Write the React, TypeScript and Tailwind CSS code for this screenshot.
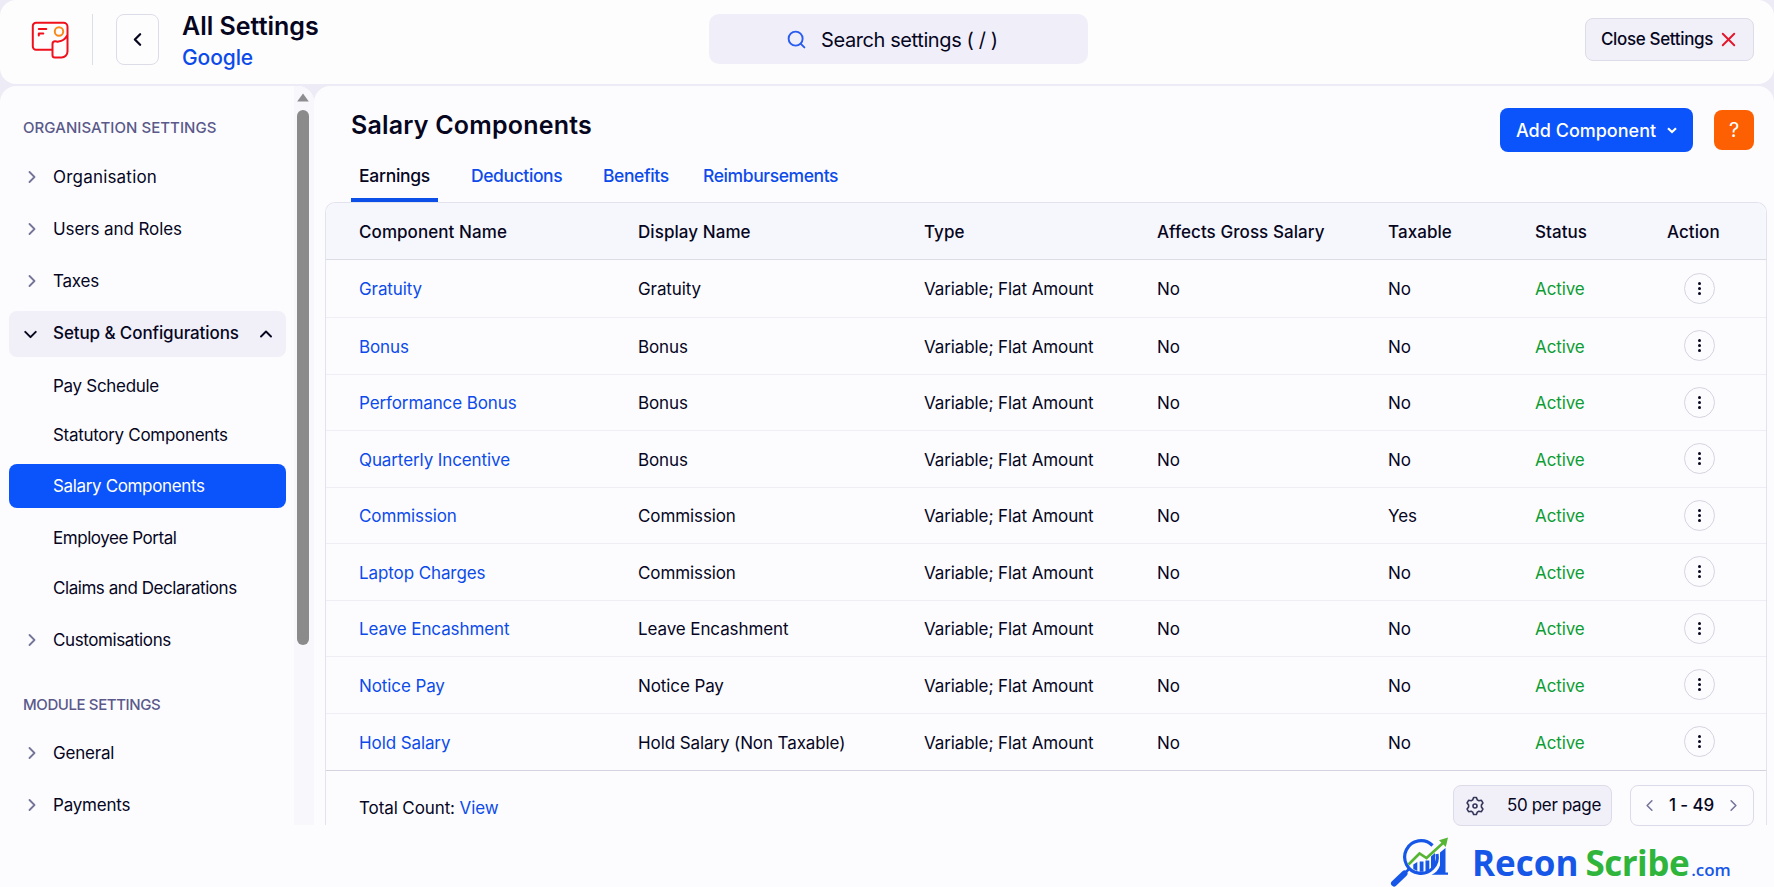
import { ChevronDown, ChevronLeft, ChevronRight, ChevronUp, Search, X } from "lucide-react";

type NavItem = {
  label: string;
  kind: "group" | "open" | "child" | "active";
  style: string;
};

const ORGANISATION: NavItem[] = [
  { label: "Organisation", kind: "group", style: "h-[52px] tracking-[0.2px]" },
  { label: "Users and Roles", kind: "group", style: "h-[52px] tracking-[-0.1px]" },
  { label: "Taxes", kind: "group", style: "h-[52px] mb-1 tracking-[-0.2px]" },
  { label: "Setup & Configurations", kind: "open", style: "h-[46px] tracking-[-0.1px]" },
  { label: "Pay Schedule", kind: "child", style: "h-[59px] tracking-[-0.3px]" },
  { label: "Statutory Components", kind: "child", style: "h-[40px] mb-[8px] tracking-[-0.3px]" },
  { label: "Salary Components", kind: "active", style: "h-[44px] mb-[5px] pt-0.5 tracking-[-0.35px]" },
  { label: "Employee Portal", kind: "child", style: "h-[50px] pt-0.5 tracking-[-0.45px]" },
  { label: "Claims and Declarations", kind: "child", style: "h-[51px] tracking-[-0.45px]" },
  { label: "Customisations", kind: "group", style: "h-[52px] tracking-[-0.4px]" },
];

const MODULES: NavItem[] = [
  { label: "General", kind: "group", style: "h-[52px] tracking-[-0.2px]" },
  { label: "Payments", kind: "group", style: "h-[52px] tracking-[-0.2px]" },
];

const TABS = [
  { label: "Deductions", width: "w-[132px]" },
  { label: "Benefits", width: "w-[100px]" },
  { label: "Reimbursements", width: "w-[140px]" },
];

const COLUMNS = ["Component Name", "Display Name", "Type", "Affects Gross Salary", "Taxable", "Status", "Action"];

const ROWS = [
  { name: "Gratuity", display: "Gratuity", taxable: "No" },
  { name: "Bonus", display: "Bonus", taxable: "No" },
  { name: "Performance Bonus", display: "Bonus", taxable: "No" },
  { name: "Quarterly Incentive", display: "Bonus", taxable: "No" },
  { name: "Commission", display: "Commission", taxable: "Yes" },
  { name: "Laptop Charges", display: "Commission", taxable: "No" },
  { name: "Leave Encashment", display: "Leave Encashment", taxable: "No" },
  { name: "Notice Pay", display: "Notice Pay", taxable: "No" },
  { name: "Hold Salary", display: "Hold Salary (Non Taxable)", taxable: "No" },
];

const GRID = "grid grid-cols-[279px_286px_233px_231px_147px_132px_1fr] items-center pl-[33px]";

function PayrollLogo() {
  return (
    <svg width="40" height="40" viewBox="0 0 40 40" fill="none" stroke="#f0101c" strokeWidth="2" strokeLinecap="round" strokeLinejoin="round">
      <path d="M22 29.700H6a3.200 3.200 0 0 1-3.200-3.200V6A3.200 3.200 0 0 1 6 2.800h27.500A4 4 0 0 1 37.500 6.800V31.500a6 6 0 0 1-6 6H24.800a2.300 2.300 0 0 1-2.300-2.300V24c0-1.500 1-2.700 2.600-2.700 1.300 0 2 .5 3.400.3 4-.5 7-3 8.500-6" />
      <path d="M8.800 15.500V13.500h4.500M8.800 9h7.500" />
      <circle cx="29" cy="11.500" r="4.200" stroke="#f98a1b" />
    </svg>
  );
}

function GearIcon() {
  return (
    <svg width="20" height="20" viewBox="0 0 20 20" fill="none" stroke="#35355a" strokeWidth="1.600" strokeLinejoin="round">
      <path d="M8.600 1.500h2.800l.9 2.400 1.500.8 2.600-.4 1.500 2.600-1.500 2v2.200l1.500 2-1.500 2.600-2.600-.4-1.500.8-.9 2.400H8.600l-.9-2.400-1.500-.8-2.600.4-1.500-2.600 1.500-2V8.900l-1.500-2 1.500-2.600 2.600.4 1.500-.8z" />
      <circle cx="10" cy="10" r="2" />
    </svg>
  );
}

function BrandMark() {
  return (
    <svg width="60" height="50" viewBox="0 0 60 50" fill="none">
      <path d="M4 46.500 14.500 36.500" stroke="#1657e8" strokeWidth="6" strokeLinecap="round" />
      <path d="M14 37 19.500 31.500" stroke="#1657e8" strokeWidth="2.500" />
      <path d="M42.500 8.500A16.300 16.300 0 1 0 47 17" stroke="#1657e8" strokeWidth="3.200" />
      <path d="M23.300 27.500l4-2.500v9l-4-2zM29.700 24.500h3.800V34.800h-3.800zM35.500 23.500h3.800V34.500h-3.800zM41 19.500l4-3.500v13c-1 2-2.500 3.500-4 4.500zM50 15.500l5.500-4.500v24.500h2.500v2.300H41.500c4-1.500 7-5 8.500-9.300z" fill="#1657e8" />
      <path d="M18.500 27.500 29.500 16.500 36.500 21 53 6" stroke="#56b532" strokeWidth="2.600" />
      <path d="M49 3.200 58 .5 55.800 10z" fill="#56b532" />
    </svg>
  );
}

function NavRow({ item }: { item: NavItem }) {
  if (item.kind === "child") {
    return <div className={`flex items-center pl-11 ${item.style}`}>{item.label}</div>;
  }
  if (item.kind === "active") {
    return (
      <div className={`flex items-center rounded-lg bg-[#0b53fb] pl-11 text-white ${item.style}`}>{item.label}</div>
    );
  }
  if (item.kind === "open") {
    return (
      <div className={`flex items-center rounded-lg bg-[#f1f0f9] pr-2.5 font-medium ${item.style}`}>
        <ChevronDown size={21} strokeWidth={2.3} className="ml-[11px]" />
        <span className="ml-3 flex-1">{item.label}</span>
        <ChevronUp size={20} strokeWidth={2.3} />
      </div>
    );
  }
  return (
    <div className={`flex items-center ${item.style}`}>
      <ChevronRight size={20} strokeWidth={2.2} className="ml-[13px] text-[#75749b]" />
      <span className="ml-[11px] pt-0.5">{item.label}</span>
    </div>
  );
}

function Header() {
  return (
    <header className="flex h-[84px] shrink-0 rounded-2xl bg-[#fdfdfe] pr-5">
      <div className="flex w-[709px] shrink-0 items-start">
        <div className="mt-5 ml-[30px]">
          <PayrollLogo />
        </div>
        <div className="mt-3.5 ml-[22px] h-[51px] w-px bg-[#dedee9]" />
        <button type="button" className="mt-3.5 ml-[23px] flex h-[51px] w-[43px] items-center justify-center rounded-lg border border-[#dddde9]">
          <ChevronLeft size={21} strokeWidth={2.6} className="mr-px" />
        </button>
        <div className="mt-[11px] ml-[23px]">
          <h1 className="text-[25px] leading-[30px] font-semibold">All Settings</h1>
          <p className="text-[21px] leading-[34px] font-medium tracking-[-0.1px] text-[#0c4bea]">Google</p>
        </div>
      </div>
      <div className="mt-3.5 flex h-[50px] w-[379px] items-center rounded-[10px] bg-[#f0eff9] pl-[77px]">
        <Search size={21} strokeWidth={2.2} className="text-[#2a5cf0]" />
        <span className="mt-0.5 ml-[14px] text-[20px] tracking-[-0.4px]">Search settings ( / )</span>
      </div>
      <button type="button" className="mt-[18px] ml-auto flex h-[43px] w-[169px] items-center rounded-lg border border-[#dddce9] bg-[#f1f0f8] pl-[15px] text-[17px] font-medium tracking-[-0.35px]">
        <span className="whitespace-nowrap">Close Settings</span>
        <X size={23} strokeWidth={2} className="ml-1 text-[#e5162c]" />
      </button>
    </header>
  );
}

function Sidebar() {
  return (
    <aside className="flex w-[314px] overflow-hidden rounded-t-2xl bg-[#fcfcfe]">
      <nav className="w-[286px] pl-[9px] text-[17px]">
        <h2 className="mt-[30px] ml-[14px] h-6 text-[15px] leading-6 font-medium tracking-[0.05px] whitespace-nowrap text-[#5a598a]">
          ORGANISATION SETTINGS
        </h2>
        <div className="mt-[11px]">
          {ORGANISATION.map((item) => (
            <NavRow key={item.label} item={item} />
          ))}
        </div>
        <h2 className="mt-[27px] ml-[14px] h-6 text-[15px] leading-6 font-medium tracking-[-0.4px] whitespace-nowrap text-[#5a598a]">
          MODULE SETTINGS
        </h2>
        <div className="mt-[10px]">
          {MODULES.map((item) => (
            <NavRow key={item.label} item={item} />
          ))}
        </div>
      </nav>
      {/* Scrollbar */}
      <div className="ml-[8px] flex w-5 flex-col bg-[#f8f8fc]">
        <svg width="12" height="9" viewBox="0 0 12 9" className="mt-[7px] ml-[2.500px]">
          <path d="M6 .5 11.800 8.500H.2z" fill="#8d8d90" />
        </svg>
        <div className="mt-2 ml-[2.500px] h-[535px] w-3 rounded-full bg-[#8b8b8c]" />
      </div>
    </aside>
  );
}

function SalaryTable() {
  return (
    <div className="ml-[11px] flex h-[623px] w-[1442px] flex-col rounded-t-[10px] border border-b-0 border-[#e3e3ed] text-[17px] tracking-[-0.1px]">
      <div className={`h-[57px] shrink-0 rounded-t-[10px] border-b border-[#dcdce7] bg-[#f6f7fc] pt-[3px] font-medium tracking-[0.07px] ${GRID}`}>
        {COLUMNS.map((c) => (
          <span key={c}>{c}</span>
        ))}
      </div>
      <div className="grid h-[511px] shrink-0 grid-rows-[58px_repeat(8,minmax(0,1fr))] border-b border-[#d4d4e0]">
        {ROWS.map((row) => (
          <div key={row.name} className={`border-b border-[#eeeef4] last:border-b-0 *:[span]:pt-[3px] ${GRID}`}>
            <span className="text-[#0c4bea]">{row.name}</span>
            <span>{row.display}</span>
            <span>Variable; Flat Amount</span>
            <span>No</span>
            <span>{row.taxable}</span>
            <span className="text-[#0d9d33]">Active</span>
            <button type="button" className="ml-[16.500px] flex size-[31px] flex-col items-center justify-center gap-[2px] rounded-full border-[1.500px] border-[#d5d5e0]">
              <i className="size-[3px] rounded-full bg-[#06061f]" />
              <i className="size-[3px] rounded-full bg-[#06061f]" />
              <i className="size-[3px] rounded-full bg-[#06061f]" />
            </button>
          </div>
        ))}
      </div>
      <div className="flex flex-1 items-start pt-[13px] pr-3 pl-[33px]">
        <div className="mt-3 leading-6">
          Total Count: <a className="text-[#0c4bea]">View</a>
        </div>
        <button type="button" className="mt-px ml-auto flex h-[41px] w-[159px] items-center rounded-lg border border-[#dcdbe9] bg-[#f1f0f9] pl-[11px]">
          <GearIcon />
          <span className="ml-[22px] tracking-[-0.35px] whitespace-nowrap">50 per page</span>
        </button>
        <div className="mt-px ml-[18px] flex h-[41px] w-[124px] items-center justify-between rounded-lg border border-[#dcdbe9] pr-2.5 pl-[9px] font-medium">
          <ChevronLeft size={19} className="text-[#75749b]" />
          1 - 49
          <ChevronRight size={19} className="text-[#75749b]" />
        </div>
      </div>
    </div>
  );
}

export default function App() {
  return (
    <div className="flex h-[887px] w-[1774px] flex-col overflow-hidden bg-[#fcfcfe] font-['Inter',sans-serif] text-[#06061f]">
      <div className="flex h-[825px] shrink-0 flex-col gap-[2px] bg-[#ecebf6]">
        <Header />
        <div className="flex min-h-0 flex-1">
          <Sidebar />
          <main className="flex-1 rounded-t-2xl bg-[#fcfcfe]">
            <div className="flex h-[70px] pr-5 pl-[37px]">
              <h2 className="mt-[23px] text-[25px] leading-8 font-semibold tracking-[0.2px]">Salary Components</h2>
              <button type="button" className="mt-[22px] ml-auto flex h-11 w-[193px] items-center rounded-lg bg-[#0b53fb] pl-4 text-[18px] font-medium text-white">
                Add Component
                <svg width="10" height="7" viewBox="0 0 10 7" className="ml-[11px]">
                  <path d="M1 1.300 5 5 9 1.300" fill="none" stroke="currentColor" strokeWidth="2.200" />
                </svg>
              </button>
              <button type="button" className="mt-6 ml-[21px] size-10 rounded-lg bg-[#fd6003] text-[20px] text-white">
                ?
              </button>
            </div>
            <div className="flex h-[46px] pl-[37px] text-[17.500px] font-medium tracking-[-0.4px]">
              <div className="mr-[33px] flex h-[46px] w-[87px] justify-center border-b-4 border-[#0b4fe8] pt-[7px] tracking-[-0.3px]">Earnings</div>
              {TABS.map((tab) => (
                <div key={tab.label} className={`pt-[7px] text-[#0c4bea] ${tab.width}`}>
                  {tab.label}
                </div>
              ))}
            </div>
            <SalaryTable />
          </main>
        </div>
      </div>
      <footer className="flex h-[62px] pt-3 pl-[1390px]">
        <BrandMark />
        <div className="ml-[22px] flex items-baseline font-['Open_Sans',sans-serif] text-[35px] leading-[52px] font-bold text-[#1657e8]">
          Recon
          <span className="ml-[7px] tracking-[-0.5px] text-[#2fb53c]">Scribe</span>
          <span className="ml-0.5 text-[17px] font-semibold">.com</span>
        </div>
      </footer>
    </div>
  );
}
